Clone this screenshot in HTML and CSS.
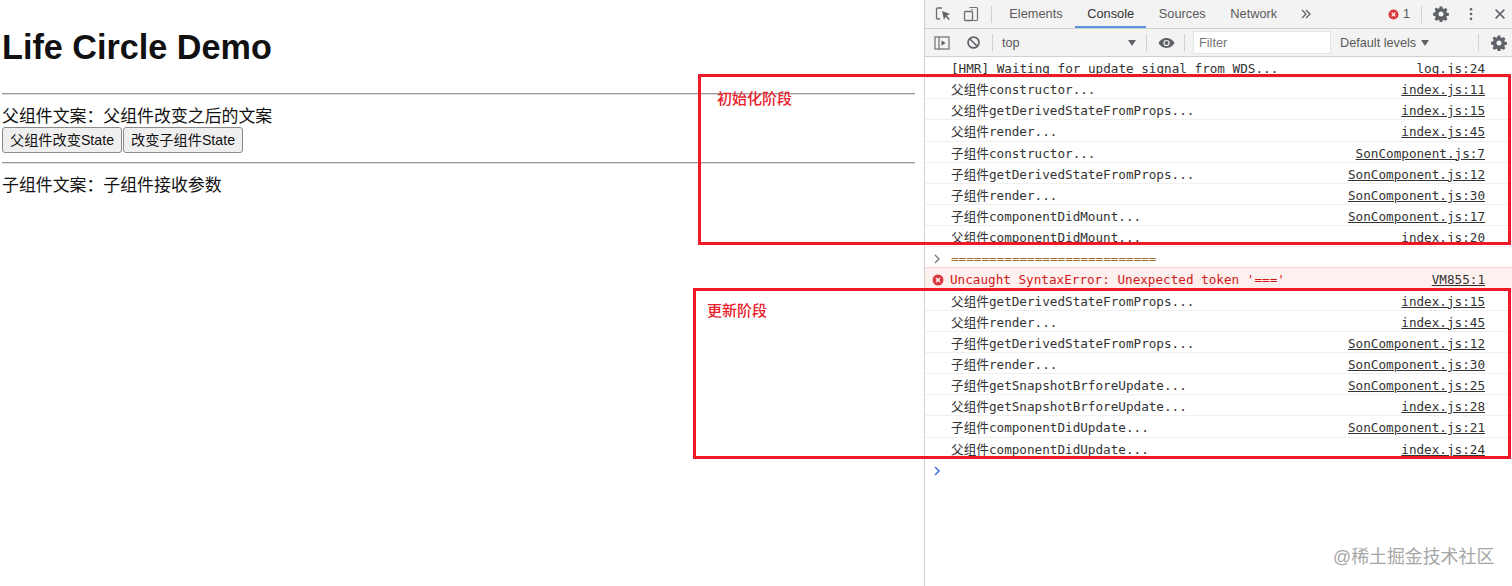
FILE: index.html
```html
<!DOCTYPE html>
<html lang="zh">
<head>
<meta charset="utf-8">
<title>Life Circle Demo</title>
<link rel="stylesheet" href="styles.css">
</head>
<body>
<div class="page">
  <main class="app">
    <h1>Life Circle Demo</h1>
    <hr class="rule-first">
    <div class="copy">父组件文案：父组件改变之后的文案</div>
    <div class="buttons"><button>父组件改变State</button><button>改变子组件State</button></div>
    <hr class="rule-second">
    <div class="copy">子组件文案：子组件接收参数</div>
  </main>
  <aside class="devtools">
    <div class="tabbar">
      <svg class="ic ic-inspect" viewBox="0 0 16 16"><path d="M7 2H2.500A1 1 0 0 0 1.500 3v9a1 1 0 0 0 1 1H5" fill="none" stroke="#6e6e6e" stroke-width="1.300"/><path d="M7 5l2 9 1.600-3.200 3.200 3.200 1.100-1.100-3.200-3.100 3.200-1.700z" fill="#5f6368"/></svg>
      <svg class="ic ic-device" viewBox="0 0 16 16"><path d="M6.500 1.500h7a1 1 0 0 1 1 1v11a1 1 0 0 1-1 1h-4M9 4.500V3" fill="none" stroke="#6e6e6e" stroke-width="1.200"/><rect x="1.500" y="5.500" width="8" height="9" rx="1" fill="none" stroke="#6e6e6e" stroke-width="1.300"/></svg>
      <span class="sep sep-tabs"></span>
      <span class="tab tab-elements">Elements</span>
      <span class="tab tab-active">Console</span>
      <span class="tab">Sources</span>
      <span class="tab">Network</span>
      <svg class="ic ic-more" viewBox="0 0 10 10"><path d="M1 1l4 4-4 4M5 1l4 4-4 4" fill="none" stroke="#5f6368" stroke-width="1.300"/></svg>
      <span class="spacer"></span>
      <svg class="err-dot" viewBox="0 0 12 12"><circle cx="6" cy="6" r="5.500" fill="#d93a3e"/><path d="M4 4l4 4M8 4l-4 4" stroke="#fff" stroke-width="1.300"/></svg>
      <span class="err-count">1</span>
      <span class="sep sep-err"></span>
      <svg class="ic ic-gear" viewBox="0 0 16 16"><use href="#gear"/></svg>
      <svg class="ic ic-dots" viewBox="0 0 16 16"><circle cx="8" cy="2.500" r="1.500" fill="#5f6368"/><circle cx="8" cy="8" r="1.500" fill="#5f6368"/><circle cx="8" cy="13.500" r="1.500" fill="#5f6368"/></svg>
      <svg class="ic ic-close" viewBox="0 0 16 16"><path d="M3 3l10 10M13 3L3 13" stroke="#5f6368" stroke-width="1.700"/></svg>
    </div>
    <div class="filterbar">
      <svg class="ic ic-panel" viewBox="0 0 16 16"><rect x="1" y="2" width="14" height="12" fill="none" stroke="#6e6e6e" stroke-width="1.200"/><path d="M5 2v12" stroke="#6e6e6e" stroke-width="1.200"/><path d="M7.500 5.200v5.600L11.500 8z" fill="#5f6368"/></svg>
      <svg class="ic ic-block" viewBox="0 0 16 16"><circle cx="8" cy="8" r="5.800" fill="none" stroke="#5f6368" stroke-width="1.800"/><path d="M4 4l8 8" stroke="#5f6368" stroke-width="1.800"/></svg>
      <span class="sep sep-block"></span>
      <span class="context">top</span>
      <span class="arrow arrow-context"></span>
      <span class="sep sep-context"></span>
      <svg class="ic ic-eye" viewBox="0 0 18 12"><path d="M9 .800C5 .800 2 3.300.600 6 2 8.700 5 11.200 9 11.200S16 8.700 17.400 6C16 3.300 13 .800 9 .800z" fill="#5f6368"/><circle cx="9" cy="6" r="3.300" fill="#f3f3f3"/><circle cx="9" cy="6" r="2" fill="#5f6368"/></svg>
      <span class="sep sep-eye"></span>
      <span class="filter">Filter</span>
      <span class="levels">Default levels</span>
      <span class="arrow arrow-levels"></span>
      <span class="spacer"></span>
      <span class="sep sep-levels"></span>
      <svg class="ic ic-gear ic-gear-second" viewBox="0 0 16 16"><use href="#gear"/></svg>
    </div>
    <div class="console">
      <div class="row"><span class="msg msg-hmr">[HMR] Waiting for update signal from WDS...</span><span class="src src-plain">log.js:24</span></div>
      <div class="row"><span class="msg">父组件constructor...</span><span class="src">index.js:11</span></div>
      <div class="row"><span class="msg">父组件getDerivedStateFromProps...</span><span class="src">index.js:15</span></div>
      <div class="row"><span class="msg">父组件render...</span><span class="src">index.js:45</span></div>
      <div class="row"><span class="msg">子组件constructor...</span><span class="src">SonComponent.js:7</span></div>
      <div class="row"><span class="msg">子组件getDerivedStateFromProps...</span><span class="src">SonComponent.js:12</span></div>
      <div class="row"><span class="msg">子组件render...</span><span class="src">SonComponent.js:30</span></div>
      <div class="row"><span class="msg">子组件componentDidMount...</span><span class="src">SonComponent.js:17</span></div>
      <div class="row"><span class="msg">父组件componentDidMount...</span><span class="src">index.js:20</span></div>
      <div class="row row-input"><svg class="chev" viewBox="0 0 8 10"><path d="M2 1l4 4-4 4" fill="none" stroke="#777" stroke-width="1.300"/></svg><span class="msg msg-sep">===========================</span></div>
      <div class="row row-error"><svg class="err-icon" viewBox="0 0 12 12"><circle cx="6" cy="6" r="5.500" fill="#d93a3e"/><path d="M4 4l4 4M8 4l-4 4" stroke="#fff" stroke-width="1.300"/></svg><span class="msg msg-error">Uncaught SyntaxError: Unexpected token '==='</span><span class="src src-error">VM855:1</span></div>
      <div class="row"><span class="msg">父组件getDerivedStateFromProps...</span><span class="src">index.js:15</span></div>
      <div class="row"><span class="msg">父组件render...</span><span class="src">index.js:45</span></div>
      <div class="row"><span class="msg">子组件getDerivedStateFromProps...</span><span class="src">SonComponent.js:12</span></div>
      <div class="row"><span class="msg">子组件render...</span><span class="src">SonComponent.js:30</span></div>
      <div class="row"><span class="msg">子组件getSnapshotBrforeUpdate...</span><span class="src">SonComponent.js:25</span></div>
      <div class="row"><span class="msg">父组件getSnapshotBrforeUpdate...</span><span class="src">index.js:28</span></div>
      <div class="row"><span class="msg">子组件componentDidUpdate...</span><span class="src">SonComponent.js:21</span></div>
      <div class="row"><span class="msg">父组件componentDidUpdate...</span><span class="src">index.js:24</span></div>
      <div class="row row-prompt"><svg class="chev" viewBox="0 0 8 10"><path d="M2 1l4 4-4 4" fill="none" stroke="#3f6fd8" stroke-width="1.500"/></svg></div>
    </div>
  </aside>
</div>
<div class="mark mark-init"></div>
<div class="mark mark-update"></div>
<span class="mark-label label-init">初始化阶段</span>
<span class="mark-label label-update">更新阶段</span>
<span class="watermark">@稀土掘金技术社区</span>
<svg class="defs" width="0" height="0"><defs><path id="gear" fill="#5f6368" fill-rule="evenodd" d="M6.700.500h2.600l.4 2.100 1.200.5 1.800-1.200 1.800 1.800-1.200 1.800.5 1.200 2.100.4v2.600l-2.100.4-.5 1.200 1.200 1.800-1.800 1.800-1.800-1.200-1.200.5-.4 2.100H6.700l-.4-2.100-1.200-.5-1.800 1.200-1.800-1.800 1.200-1.800-.5-1.200-2.100-.4V6.700l2.100-.4.5-1.200-1.200-1.800 1.800-1.800 1.800 1.200 1.200-.5zM8 5.500a2.500 2.500 0 1 0 0 5 2.500 2.500 0 0 0 0-5z"/></defs></svg>
</body>
</html>
```
FILE: styles.css
```css
* { box-sizing: border-box; }
html, body { margin: 0; padding: 0; height: 586px; overflow: hidden; background: #fff; }
body { position: relative; font-family: "Liberation Sans", "Noto Sans CJK SC", sans-serif; color: #000; }
.page { display: flex; height: 586px; }
.app { width: 924px; flex: none; padding: 0 9px 0 2px; }
h1 { margin: 0; padding-top: 28px; font-size: 34.200px; line-height: 39px; font-weight: 700; color: #111; }
hr { margin: 0; border: 0; border-top: 1px solid #999; border-bottom: 1px solid #ddd; height: 2px; }
.rule-first { margin-top: 26px; }
.rule-second { margin-top: 8px; }
.copy { font-size: 16.900px; line-height: 20px; margin-top: 12px; color: #111; }
.buttons { display: flex; height: 26px; margin-top: 0; }
.buttons button { font-family: inherit; font-size: 14.200px; color: #111; height: 26px; padding: 0 0 2px; background: #efefef; border: 1px solid #8a8a8a; border-radius: 3px; width: 120px; margin-right: 1px; white-space: nowrap; }
.buttons + .rule-second { margin-top: 9px; }
.devtools { flex: 1; border-left: 1px solid #cfcfcf; display: flex; flex-direction: column; min-width: 0; }
.tabbar { height: 29px; flex: none; background: #f3f3f3; border-bottom: 1px solid #d0d0d0; display: flex; align-items: center; font-size: 12.700px; color: #555; }
.filterbar { height: 28px; flex: none; background: #f3f3f3; border-bottom: 1px solid #d0d0d0; display: flex; align-items: center; font-size: 12.700px; color: #555; }
.ic { flex: none; display: block; }
.ic-inspect { width: 16px; height: 16px; margin-left: 10px; }
.ic-device { width: 16px; height: 16px; margin-left: 12px; }
.sep { flex: none; width: 1px; height: 17px; background: #d0d0d0; }
.sep-tabs { margin-left: 12px; }
.tab { height: 28px; line-height: 28px; padding: 0 12.300px; flex: none; color: #5a5a5a; font-size: 12.800px; }
.tab-elements { margin-left: 5px; }
.tab-active { color: #333; box-shadow: inset 0 -2px 0 #5b93e0; }
.ic-more { width: 10px; height: 10px; margin-left: 11px; }
.spacer { flex: 1; }
.err-dot { width: 11px; height: 11px; flex: none; }
.err-count { margin-left: 4px; font-size: 12.500px; }
.sep-err { margin-left: 11px; }
.ic-gear { width: 16px; height: 16px; }
.tabbar .ic-gear { margin-left: 11px; }
.ic-dots { width: 14px; height: 14px; margin-left: 15px; }
.ic-close { width: 14px; height: 14px; margin-left: 15px; margin-right: 5px; }
.ic-panel { width: 16px; height: 16px; margin-left: 9px; }
.ic-block { width: 15px; height: 15px; margin-left: 16px; }
.sep-block { margin-left: 11px; }
.context { margin-left: 9px; width: 126px; }
.arrow { width: 0; height: 0; border-left: 4px solid transparent; border-right: 4px solid transparent; border-top: 6px solid #5f6368; flex: none; }
.sep-context { margin-left: 10px; }
.ic-eye { width: 17px; height: 12px; margin-left: 11px; }
.sep-eye { margin-left: 9px; }
.filter { margin-left: 8px; width: 138px; height: 23px; line-height: 21px; padding: 1px 0 0 5px; background: #fff; border: 1px solid #e4e4e4; color: #757575; flex: none; }
.levels { margin-left: 9px; color: #5a5a5a; flex: none; }
.arrow-levels { margin-left: 5px; }
.sep-levels { margin-right: 12px; }
.ic-gear-second { margin-right: 5px; }
.console { flex: 1; font-family: "DejaVu Sans Mono", "Noto Sans CJK SC", monospace; font-size: 12.650px; color: #333; }
.row { height: 21.150px; display: flex; align-items: center; border-bottom: 1px solid #f0f0f0; padding: 4px 27px 0 26px; white-space: pre; line-height: 16px; }
.msg { flex: 1; }
.src { text-decoration: underline; flex: none; }
.src-plain { text-decoration: none; }
.row-input, .row-error, .row-prompt { padding-left: 8px; }
.row-prompt { border-bottom: 0; }
.chev { width: 8px; height: 10px; flex: none; margin-right: 10px; }
.err-icon { width: 12px; height: 12px; flex: none; margin-right: 6px; margin-left: -1px; }
.row-input { border-bottom-color: #ffd6d6; }
.msg-sep { color: #9a6d22; }
.row-error { background: #fff0f0; border-bottom-color: #ffd6d6; }
.msg-error { color: #d01818; }
.src-error { color: #333; }
.mark { position: absolute; border: 3px solid #ee1826; pointer-events: none; }
.mark-init { left: 698px; top: 74px; width: 813px; height: 171px; }
.mark-update { left: 693px; top: 288px; width: 818px; height: 171px; }
.mark-label { position: absolute; color: #e8202a; font-size: 15px; line-height: 18px; white-space: nowrap; font-weight: 500; }
.label-init { left: 717px; top: 90px; }
.label-update { left: 707px; top: 302px; }
.watermark { position: absolute; left: 1333px; top: 546px; font-size: 17.900px; line-height: 22px; color: #a6a6a6; white-space: nowrap; }
.defs { position: absolute; }
```
